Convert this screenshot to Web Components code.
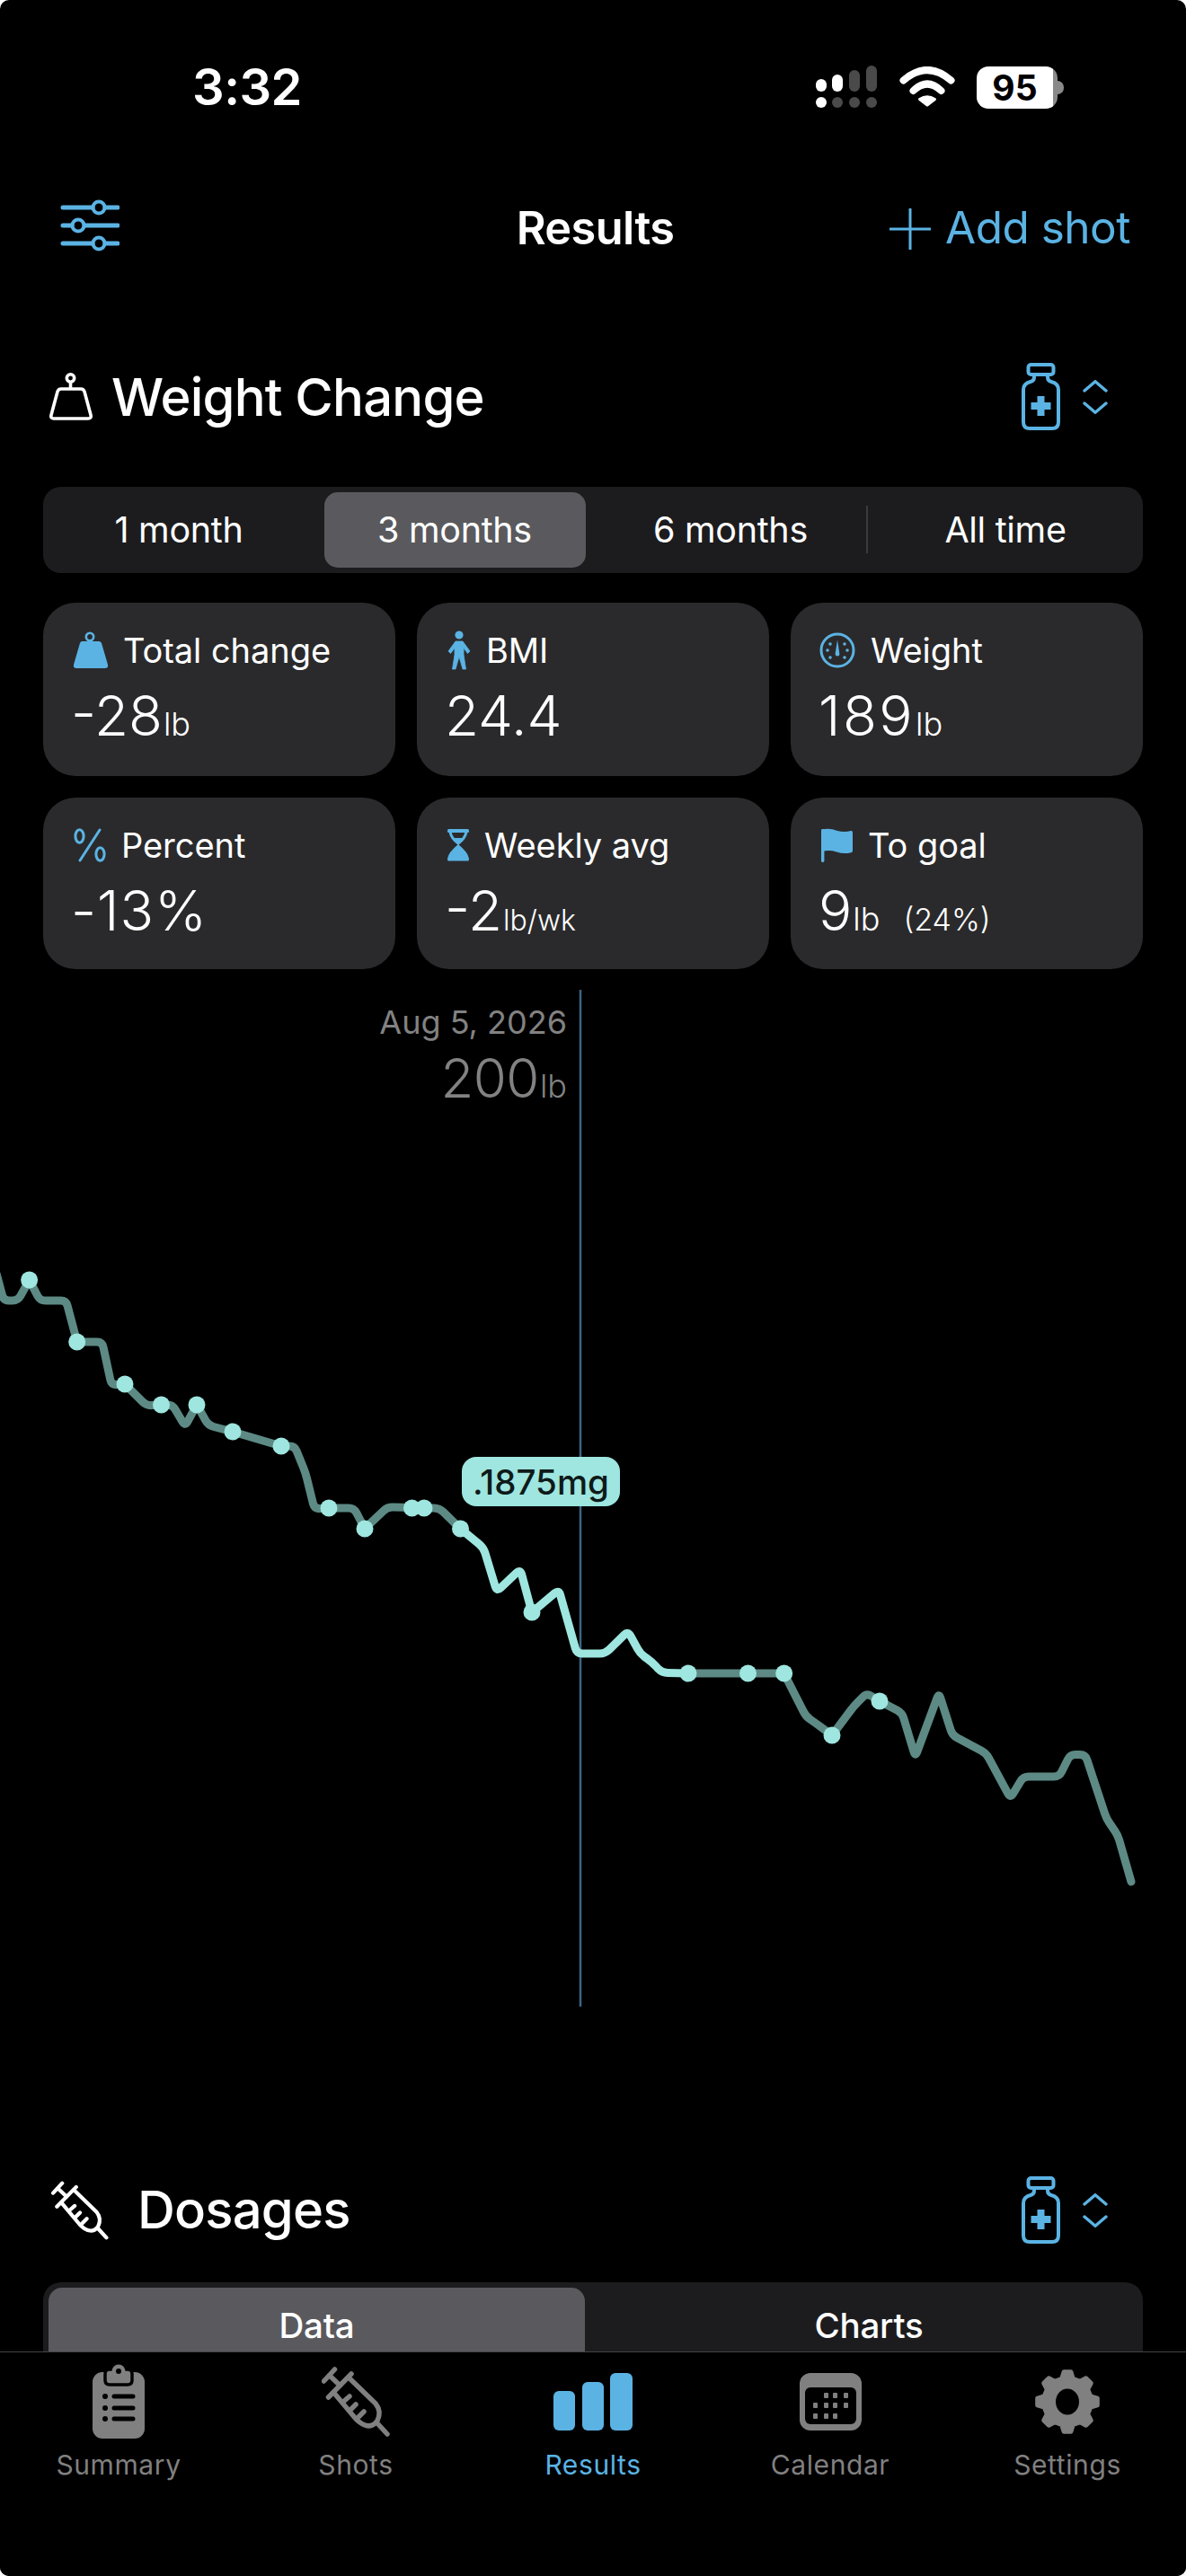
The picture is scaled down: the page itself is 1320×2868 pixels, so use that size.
<!DOCTYPE html>
<html lang="en">
<head>
<meta charset="utf-8">
<title>Results</title>
<style>
html, body { margin: 0; padding: 0; background: #fff; }
body { width: 1320px; height: 2868px; overflow: hidden; font-family: Inter, "Liberation Sans", sans-serif; }
</style>
</head>
<body>
<results-app></results-app>
<script>
const BLUE = "#5bb3e4";

function gearPath(cx, cy, R, r, teeth) {
  const step = (Math.PI * 2) / teeth;
  let d = "";
  for (let i = 0; i < teeth; i++) {
    const a = i * step - Math.PI / 2;
    const pts = [[r, a - step * 0.3], [R, a - step * 0.15], [R, a + step * 0.15], [r, a + step * 0.3]];
    for (const [rad, ang] of pts) {
      d += (d ? "L" : "M") + (cx + rad * Math.cos(ang)).toFixed(1) + " " + (cy + rad * Math.sin(ang)).toFixed(1);
    }
  }
  return d + "Z";
}

// syringe drawing shared by the title and the tab bar, only the stroke differs
function syringe(w, h, sw) {
  return `<svg width="${w}" height="${h}" viewBox="0 0 76 78" fill="none" stroke="currentColor" stroke-width="${sw}" stroke-linecap="round" stroke-linejoin="round">
    <path d="M14.5 3 2.5 16M33 8 7.5 34M8.5 9.5 20.5 21"/>
    <path d="M30 12 60 41Q67 50 62 60 55 70 44 63 41 61 38 58L14.5 30"/>
    <path d="M24 39 31 33M32 48 38 42M40 57 47 50M62 63 73 75"/>
  </svg>`;
}

const ICONS = {
  sliders: `<svg width="66" height="60" viewBox="0 0 66 60" fill="none" stroke="currentColor" stroke-width="5" stroke-linecap="round">
    <path d="M3 10H36M50 10H64M3 30H13M27 30H64M3 50H36M50 50H64"/>
    <circle cx="43" cy="10" r="6.5" stroke-width="4"/><circle cx="20" cy="30" r="6.5" stroke-width="4"/><circle cx="43" cy="50" r="6.5" stroke-width="4"/>
  </svg>`,
  plus: `<svg width="46" height="46" viewBox="0 0 46 46" stroke="currentColor" stroke-width="3" stroke-linecap="round"><path d="M23 1V45M1 23H45"/></svg>`,
  weightOutline: `<svg width="48" height="53" viewBox="0 0 48 53" fill="none" stroke="currentColor" stroke-width="3.6" stroke-linejoin="round">
    <circle cx="23.5" cy="6" r="4.2"/><path d="M23.5 10V18"/>
    <path d="M13 18H35Q38 18 39 21L46 47Q47 51 43 51H5Q1 51 2 47L9 21Q10 18 13 18Z"/>
  </svg>`,
  vial: `<svg width="43" height="75" viewBox="0 0 43 75" fill="none" stroke="currentColor" stroke-width="4">
    <rect x="7.5" y="2" width="28" height="11" rx="3"/>
    <path d="M14 13V16Q14 20 10 21 2 23 2 30V66Q2 73 9 73H34Q41 73 41 66V30Q41 23 33 21 29 20 29 16V13"/>
    <path d="M21.5 37V59M10.5 48H32.5" stroke-width="8"/>
  </svg>`,
  chevrons: `<svg width="28" height="38" viewBox="0 0 28 38" fill="none" stroke="currentColor" stroke-width="3.4" stroke-linecap="round" stroke-linejoin="round">
    <path d="M2 12 14 1.700 26 12M2 26 14 36.300 26 26"/>
  </svg>`,
  syringeTitle: syringe(64, 66, 5),
  syringeTab: syringe(76, 78, 5.5),
  weightFilled: `<svg width="38" height="42" viewBox="0 0 38 42" fill="currentColor">
    <circle cx="18" cy="6" r="4.2" fill="none" stroke="currentColor" stroke-width="2.6"/>
    <path d="M9 11H28Q30 11 31 13L38 37Q39 41 35 41H3Q-1 41 0 37L7 13Q8 11 9 11Z"/>
  </svg>`,
  person: `<svg width="26" height="44" viewBox="0 0 26 44" fill="currentColor">
    <circle cx="13" cy="5" r="4.6"/>
    <path d="M9 12H17L25 23 22.5 25.5 18 19.5V27L20.5 43H17L13 29 9 43H5.5L8 27V19.5L3.5 25.5 1 23Z" stroke="currentColor" stroke-width=".8" stroke-linejoin="round"/>
  </svg>`,
  gauge: `<svg width="40" height="40" viewBox="0 0 40 40" fill="currentColor">
    <circle cx="20" cy="20" r="18" fill="none" stroke="currentColor" stroke-width="3"/>
    <path d="M20 8.5 22.4 24Q22.4 26.5 20 26.5T17.6 24Z"/>
    <circle cx="12" cy="13" r="1.8"/><circle cx="28" cy="13" r="1.8"/><circle cx="9" cy="20" r="1.8"/><circle cx="31" cy="20" r="1.8"/><circle cx="12" cy="28" r="1.8"/><circle cx="28" cy="28" r="1.8"/>
  </svg>`,
  percent: `<svg width="36" height="38" viewBox="0 0 36 38" fill="none" stroke="currentColor" stroke-width="3" stroke-linecap="round">
    <ellipse cx="6.5" cy="9" rx="4.6" ry="7.2"/><ellipse cx="29.5" cy="29" rx="4.6" ry="7.2"/><path d="M29 2 7 36"/>
  </svg>`,
  hourglass: `<svg width="24" height="36" viewBox="0 0 24 36" fill="currentColor">
    <rect x="0" y="0" width="24" height="4" rx="1.5"/><path d="M1 35.5Q0 35.5 0 33 1 26 12 17 23 26 24 33 24 35.5 23 35.5Z"/>
    <path d="M3 3Q4 10 12 16 20 10 21 3" fill="none" stroke="currentColor" stroke-width="3"/><path d="M7 10H17L12 16Z"/>
  </svg>`,
  flag: `<svg width="35" height="38" viewBox="0 0 35 38" fill="currentColor">
    <rect x="0" y="1" width="3.4" height="37" rx="1.4"/>
    <path d="M1 3Q1 1 4 1 10 0 18 3 26 5 33 3 35 2.500 35 5V25Q35 27 32 27.500 25 29 17 26.500 9 24 1 26Z"/>
  </svg>`,
  clipboard: `<svg width="60" height="84" viewBox="0 0 60 84">
    <rect x="1" y="9" width="58" height="74" rx="11" fill="currentColor"/>
    <path d="M15 11Q15 6 20 6H40Q45 6 45 11V18Q45 23 40 23H20Q15 23 15 18Z" fill="currentColor" stroke="#000" stroke-width="3.500"/>
    <circle cx="30" cy="8" r="7.500" fill="currentColor"/><circle cx="30" cy="8" r="3" fill="#000"/>
    <g fill="#000"><circle cx="15" cy="36" r="3"/><circle cx="15" cy="49" r="3"/><circle cx="15" cy="61" r="3"/></g>
    <path d="M25 36H46M25 49H46M25 61H46" stroke="#000" stroke-width="5" stroke-linecap="round"/>
  </svg>`,
  bars: `<svg width="88" height="64" viewBox="0 0 88 64" fill="currentColor">
    <rect x="0" y="20" width="24" height="44" rx="6"/><rect x="32" y="10" width="24" height="54" rx="6"/><rect x="63" y="0" width="25" height="64" rx="6"/>
  </svg>`,
  calendar: `<svg width="69" height="64" viewBox="0 0 69 64">
    <rect x="0" y="0" width="69" height="64" rx="12" fill="currentColor"/>
    <rect x="6" y="16" width="57" height="41" rx="6" fill="#000"/>
    <g fill="currentColor">
      <rect x="27" y="22" width="5" height="6" rx="1"/><rect x="37" y="22" width="5" height="6" rx="1"/><rect x="49" y="22" width="5" height="6" rx="1"/>
      <rect x="15" y="33" width="5" height="6" rx="1"/><rect x="27" y="33" width="5" height="6" rx="1"/><rect x="37" y="33" width="5" height="6" rx="1"/><rect x="49" y="33" width="5" height="6" rx="1"/>
      <rect x="15" y="45" width="5" height="6" rx="1"/><rect x="27" y="45" width="5" height="6" rx="1"/><rect x="37" y="45" width="5" height="6" rx="1"/>
    </g>
  </svg>`,
  gear: `<svg width="74" height="74" viewBox="0 0 74 74">
    <path d="${gearPath(37, 37, 33.5, 26.5, 8)}" fill="currentColor" stroke="currentColor" stroke-width="5" stroke-linejoin="round"/>
    <ellipse cx="37" cy="37" rx="13" ry="14.500" fill="#000"/>
  </svg>`,
};

class AppIcon extends HTMLElement {
  connectedCallback() {
    if (this.shadowRoot) return;
    this.attachShadow({ mode: "open" });
    this.shadowRoot.innerHTML = `<style>:host{display:inline-flex;flex:none;line-height:0}</style>` + ICONS[this.getAttribute("name")];
  }
}

class StatusBar extends HTMLElement {
  constructor() {
    super();
    this.attachShadow({ mode: "open" });
    this.shadowRoot.innerHTML = `
    <style>
      :host { display: flex; align-items: center; height: 194px; padding: 0 136px 0 214px; box-sizing: border-box; color: #fff; }
      .time { font-size: 56px; font-weight: 600; letter-spacing: -.5px; line-height: 1; }
      .right { margin-left: auto; display: flex; align-items: center; }
      .batt { width: 90px; height: 47px; margin-left: 24px; border-radius: 13px; box-sizing: border-box; padding-right: 5px; background: linear-gradient(to right, #fff 94.4%, #8a8a8a 94.4%); color: #000; font-size: 39px; font-weight: 700; display: flex; align-items: center; justify-content: center; }
      .nub { width: 7px; height: 15px; border-radius: 0 8px 8px 0; background: #8a8a8a; margin-left: 0; }
      svg { display: block; }
    </style>
    <span class="time">3:32</span>
    <div class="right">
      <svg width="68" height="48" viewBox="0 0 68 48">
        <g fill="#fff"><rect x="0" y="15" width="12" height="14" rx="6"/><rect x="18" y="10" width="12" height="19" rx="6"/><circle cx="6" cy="41" r="6"/></g>
        <g fill="#4a4a4a"><rect x="37" y="5" width="12" height="24" rx="6"/><rect x="56" y="0" width="12" height="29" rx="6"/><circle cx="24" cy="41" r="6"/><circle cx="43" cy="41" r="6"/><circle cx="62" cy="41" r="6"/></g>
      </svg>
      <svg width="62" height="46" viewBox="0 0 62 46" style="margin-left:25px" fill="none" stroke="#fff" stroke-width="8" stroke-linecap="round">
        <path d="M4.500 15.500Q31 -7.500 57.500 15.500"/><path d="M15.500 27Q31 12 46.500 27"/>
        <path d="M31 43 22.500 36.500Q31 31 39.500 36.500Z" fill="#fff" stroke-width="3" stroke-linejoin="round"/>
      </svg>
      <div class="batt"><span>95</span></div><div class="nub"></div>
    </div>`;
  }
}

class NavBar extends HTMLElement {
  constructor() {
    super();
    this.attachShadow({ mode: "open" });
    this.shadowRoot.innerHTML = `
    <style>
      :host { display: grid; grid-template-columns: 1fr auto 1fr; align-items: center; height: 116px; padding: 2px 62px 0 67px; box-sizing: border-box; color: ${BLUE}; }
      .title { color: #fff; font-size: 50.500px; font-weight: 600; letter-spacing: -.6px; }
      .add { justify-self: end; display: flex; align-items: center; gap: 16px; font-size: 49.500px; font-weight: 400; letter-spacing: -.5px; }
      .add app-icon { margin-top: 3px; }
    </style>
    <div><app-icon name="sliders"></app-icon></div>
    <div class="title">Results</div>
    <div class="add"><app-icon name="plus"></app-icon><span>Add shot</span></div>`;
  }
}

class SectionHead extends HTMLElement {
  constructor() {
    super();
    this.attachShadow({ mode: "open" });
    this.shadowRoot.innerHTML = `
    <style>
      :host { display: flex; align-items: center; height: 75px; padding: 0 87px 0 55px; color: #fff; }
      .title { font-size: 58px; font-weight: 500; letter-spacing: -.8px; margin-left: var(--title-gap, 21px); margin-top: var(--title-top, 0); white-space: nowrap; }
      .pick { margin-left: auto; display: flex; align-items: center; gap: 25px; color: ${BLUE}; }
    </style>
    <slot name="icon"></slot>
    <span class="title"><slot></slot></span>
    <div class="pick"><app-icon name="vial"></app-icon><app-icon name="chevrons"></app-icon></div>`;
  }
}

class SegControl extends HTMLElement {
  constructor() {
    super();
    this.attachShadow({ mode: "open" });
    this.shadowRoot.innerHTML = `
    <style>
      :host { display: grid; grid-auto-flow: column; align-items: stretch; margin: 0 48px; height: 96px; padding: 6px 0; box-sizing: border-box; background: #1c1c1e; border-radius: 20px; }
    </style>
    <slot></slot>`;
    this.style.gridTemplateColumns = this.getAttribute("cols");
  }
}

class SegItem extends HTMLElement {
  constructor() {
    super();
    this.attachShadow({ mode: "open" });
    this.shadowRoot.innerHTML = `
    <style>
      :host { display: flex; align-items: center; justify-content: center; color: #fff; font-size: 39.500px; font-weight: 400; letter-spacing: -.3px; box-sizing: border-box; white-space: nowrap; }
      :host([active]) { background: #5a5a5e; border-radius: 15px; }
      :host([strong]) { font-weight: 500; font-size: 38.500px; letter-spacing: -.2px; }
    </style>
    <slot></slot>`;
  }
}

class StatGrid extends HTMLElement {
  constructor() {
    super();
    this.attachShadow({ mode: "open" });
    this.shadowRoot.innerHTML = `
    <style>
      :host { display: grid; grid-template-columns: repeat(3, 392px); grid-template-rows: 193px 191px; column-gap: 24px; row-gap: 24px; margin: 33px 48px 0; }
    </style>
    <slot></slot>`;
  }
}

class StatCard extends HTMLElement {
  constructor() {
    super();
    this.attachShadow({ mode: "open" });
    const unit = this.getAttribute("unit") || "";
    const extra = this.getAttribute("extra");
    const small = unit.length > 2;
    const track = this.getAttribute("track") || 0;
    this.shadowRoot.innerHTML = `
    <style>
      :host { display: block; background: #2a2a2c; border-radius: 36px; padding: 32px 0 0 34px; box-sizing: border-box; color: #fff; }
      .label { display: flex; align-items: center; gap: 17px; height: 42px; font-size: 38px; font-weight: 400; letter-spacing: -.05px; color: ${BLUE}; }
      .label span { color: #fff; }
      .value { margin-top: 17px; font-size: 62px; font-weight: 300; line-height: 70px; white-space: nowrap; margin-left: -3px; letter-spacing: ${track}px; }
      .unit { font-size: ${small ? 32 : 36}px; margin-left: 1px; letter-spacing: 0; }
      .extra { font-size: 34px; margin-left: 26px; letter-spacing: 0; }
    </style>
    <div class="label"><slot name="icon"></slot><span>${this.getAttribute("label")}</span></div>
    <div class="value">${this.getAttribute("value")}<span class="unit">${unit}</span>${extra ? `<span class="extra">${extra}</span>` : ""}</div>`;
  }
}

const CHART_TOP = 1102;
const DIM_A = [[-4,1418],[4,1448],[20,1448],[32.6,1425],[44.6,1448],[73.6,1448],[85.7,1494],[113.8,1494],[124,1542],[139,1541],[163,1565],[179.5,1564],[192,1564],[206,1588],[219,1564],[232,1587],[259,1594],[313,1610],[328,1610],[340,1640],[350,1680],[366,1679],[394,1679],[406,1702],[431,1678],[489,1679],[512.5,1702]];
const BRIGHT = [[512.5,1702],[538,1723],[553,1772],[579,1747],[592,1795],[622,1770],[642,1841],[673.6,1841],[699,1816],[712.4,1841],[725,1850],[737,1862.500],[766,1863]];
const DIM_B = [[766,1863],[872.7,1863],[897,1911],[910,1920],[926,1932],[950,1900],[964.6,1885],[979,1894],[1004,1907],[1018.7,1956],[1045,1885],[1060,1932],[1097.7,1952],[1124.5,2002],[1139,1978],[1179,1978],[1191,1953.600],[1208,1953.600],[1231.6,2025],[1244,2043],[1259,2095]];
const DOTS = [[32.6,1425],[85.7,1494],[139,1541],[179.5,1564],[219,1564],[259,1594],[313,1610],[366,1679],[406,1702],[458.5,1679],[472,1679],[512.5,1702],[592,1795],[766,1863],[832.5,1863],[872.7,1863],[926,1932],[979,1894]];

// polyline with its corners rounded off
function roundedLine(pts, r) {
  let d = "M" + pts[0].join(" ");
  for (let i = 1; i < pts.length - 1; i++) {
    const [px, py] = pts[i - 1], [x, y] = pts[i], [nx, ny] = pts[i + 1];
    const l1 = Math.hypot(x - px, y - py), l2 = Math.hypot(nx - x, ny - y);
    const a = Math.min(r, l1 / 2), b = Math.min(r, l2 / 2);
    d += `L${(x - ((x - px) / l1) * a).toFixed(1)} ${(y - ((y - py) / l1) * a).toFixed(1)}`;
    d += `Q${x} ${y} ${(x + ((nx - x) / l2) * b).toFixed(1)} ${(y + ((ny - y) / l2) * b).toFixed(1)}`;
  }
  return d + "L" + pts[pts.length - 1].join(" ");
}

class WeightChart extends HTMLElement {
  constructor() {
    super();
    this.attachShadow({ mode: "open" });
    const dots = DOTS.map(([x, y]) => `<circle cx="${x}" cy="${y}" r="9.500"/>`).join("");
    this.shadowRoot.innerHTML = `
    <style>
      :host { display: block; position: relative; height: 1132px; margin-top: 23px; }
      svg { display: block; position: absolute; left: 0; top: 0; }
      .read { position: absolute; right: 689px; top: 14px; text-align: right; color: #828282; }
      .date { font-size: 36px; font-weight: 400; line-height: 44px; }
      .big { font-size: 60px; font-weight: 300; line-height: 72px; margin-top: 4px; letter-spacing: -.5px; }
      .big span { font-size: 36px; margin-left: 1px; letter-spacing: 0; }
      .tip { position: absolute; left: 514px; top: 520px; width: 176px; height: 55px; border-radius: 16px; background: #9ee6df; color: #0e1a19; font-size: 38.500px; font-weight: 500; display: flex; align-items: center; justify-content: center; }
    </style>
    <svg width="1320" height="1132" viewBox="0 ${CHART_TOP} 1320 1132" fill="none" stroke-linejoin="round" stroke-linecap="round">
      <path d="M646 ${CHART_TOP}V2234" stroke="#3e6484" stroke-width="2.500" stroke-linecap="butt"/>
      <path d="${roundedLine(DIM_A, 6)}" stroke="#5d8a84" stroke-width="9"/>
      <path d="${roundedLine(DIM_B, 6)}" stroke="#5d8a84" stroke-width="9"/>
      <path d="${roundedLine(BRIGHT, 6)}" stroke="#9ee6df" stroke-width="9"/>
      <g fill="#9ee6df">${dots}</g>
    </svg>
    <div class="read"><div class="date">Aug 5, 2026</div><div class="big">200<span>lb</span></div></div>
    <div class="tip">.1875mg</div>`;
  }
}

class TabItem extends HTMLElement {
  constructor() {
    super();
    this.attachShadow({ mode: "open" });
    this.shadowRoot.innerHTML = `
    <style>
      :host { display: flex; flex-direction: column; align-items: center; color: #808080; }
      :host([active]) { color: ${BLUE}; }
      .ico { height: 84px; display: flex; align-items: center; justify-content: center; }
      .lab { margin-top: 10px; font-size: 30px; line-height: 36px; font-weight: 400; letter-spacing: .6px; }
    </style>
    <div class="ico"><slot></slot></div>
    <div class="lab">${this.getAttribute("label")}</div>`;
  }
}

class TabBar extends HTMLElement {
  constructor() {
    super();
    this.attachShadow({ mode: "open" });
    this.shadowRoot.innerHTML = `
    <style>
      :host { position: absolute; left: 0; right: 0; bottom: 0; height: 250px; box-sizing: border-box; padding-top: 13px; background: #000; border-top: 1px solid #444446; display: grid; grid-template-columns: repeat(5, 1fr); align-items: start; }
    </style>
    <slot></slot>`;
  }
}

class ResultsApp extends HTMLElement {
  constructor() {
    super();
    this.attachShadow({ mode: "open" });
    this.shadowRoot.innerHTML = `
    <style>
      :host { display: block; position: relative; width: 1320px; height: 2868px; overflow: hidden; background: #000; border-radius: 10px; font-family: Inter, "Liberation Sans", sans-serif; }
      .gap-a { height: 94px; } .gap-b { height: 63px; } .gap-c { height: 189px; } .gap-d { height: 43px; }
    </style>
    <status-bar></status-bar>
    <nav-bar></nav-bar>
    <div class="gap-a"></div>
    <section-head><app-icon slot="icon" name="weightOutline"></app-icon>Weight Change</section-head>
    <div class="gap-b"></div>
    <seg-control cols="302px 312px 302px 2px 306px">
      <seg-item>1 month</seg-item>
      <seg-item active style="width:291px;justify-self:center">3 months</seg-item>
      <seg-item>6 months</seg-item>
      <span style="background:#3a3a3c;margin:15px 0 16px"></span>
      <seg-item>All time</seg-item>
    </seg-control>
    <stat-grid>
      <stat-card label="Total change" value="-28" unit="lb"><app-icon slot="icon" name="weightFilled"></app-icon></stat-card>
      <stat-card label="BMI" value="24.4"><app-icon slot="icon" name="person"></app-icon></stat-card>
      <stat-card label="Weight" value="189" unit="lb" track="2.5"><app-icon slot="icon" name="gauge" style="margin-left:-2px"></app-icon></stat-card>
      <stat-card label="Percent" value="-13%" track="1"><app-icon slot="icon" name="percent"></app-icon></stat-card>
      <stat-card label="Weekly avg" value="-2" unit="lb/wk"><app-icon slot="icon" name="hourglass"></app-icon></stat-card>
      <stat-card label="To goal" value="9" unit="lb" extra="(24%)"><app-icon slot="icon" name="flag"></app-icon></stat-card>
    </stat-grid>
    <weight-chart></weight-chart>
    <div class="gap-c"></div>
    <section-head style="--title-gap:32px;--title-top:-2px;padding-left:57px"><app-icon slot="icon" name="syringeTitle"></app-icon>Dosages</section-head>
    <div class="gap-d"></div>
    <seg-control cols="609px 1fr">
      <seg-item active strong style="margin-left:6px;width:597px;border-radius:15px 15px 0 0">Data</seg-item>
      <seg-item strong style="padding-left:5px">Charts</seg-item>
    </seg-control>
    <tab-bar>
      <tab-item label="Summary"><app-icon name="clipboard"></app-icon></tab-item>
      <tab-item label="Shots"><app-icon name="syringeTab"></app-icon></tab-item>
      <tab-item label="Results" active><app-icon name="bars"></app-icon></tab-item>
      <tab-item label="Calendar"><app-icon name="calendar"></app-icon></tab-item>
      <tab-item label="Settings"><app-icon name="gear"></app-icon></tab-item>
    </tab-bar>`;
  }
}

customElements.define("app-icon", AppIcon);
customElements.define("status-bar", StatusBar);
customElements.define("nav-bar", NavBar);
customElements.define("section-head", SectionHead);
customElements.define("seg-control", SegControl);
customElements.define("seg-item", SegItem);
customElements.define("stat-grid", StatGrid);
customElements.define("stat-card", StatCard);
customElements.define("weight-chart", WeightChart);
customElements.define("tab-item", TabItem);
customElements.define("tab-bar", TabBar);
customElements.define("results-app", ResultsApp);
</script>
</body>
</html>
